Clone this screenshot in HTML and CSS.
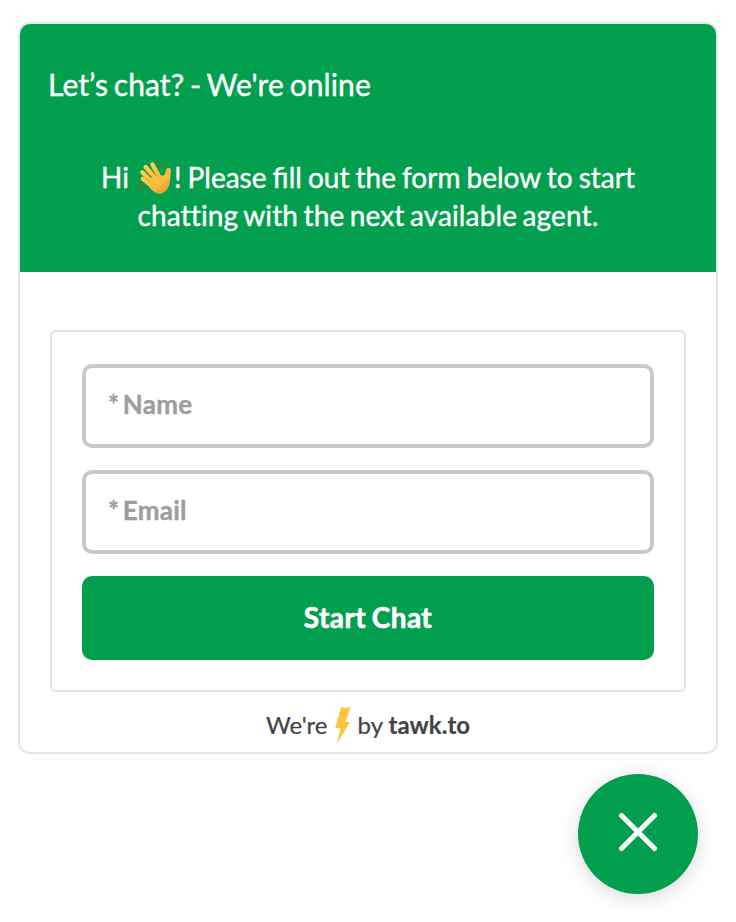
FILE: index.html
```html
<!DOCTYPE html>
<html lang="en">
<head>
<meta charset="utf-8">
<title>Chat</title>
<link rel="stylesheet" href="styles.css">
</head>
<body>
<main class="widget">
  <header class="header">
    <h1 class="title">Let’s chat? - We're online</h1>
    <p class="intro">Hi <svg class="wave" viewBox="0 0 36 36" aria-label="waving hand">
      <defs><linearGradient id="skin" gradientUnits="userSpaceOnUse" x1="8" y1="6" x2="28" y2="34"><stop offset="0" stop-color="#ffce52"/><stop offset=".65" stop-color="#fdbb40"/><stop offset="1" stop-color="#ee9223"/></linearGradient></defs>
      <g fill="none" stroke="url(#skin)" stroke-width="4.2" stroke-linecap="round">
        <path d="M20 20 8.6 7M23 18 15.4 4.4M17 24 5.3 12.3M17 28 5.8 18.8"/>
      </g>
      <path fill="url(#skin)" d="M14 18 24.5 15.5C27 16.5 27.8 15.5 28.7 11.5c.6-2.8 1.6-4 3.3-3.6 1.8.5 2.2 2.2 1.8 4.9-.5 2.8-.5 4.8-.8 7.8-.3 6-3.3 11.3-8.1 12.8-4.9 1.5-8-1.3-12-5.3l-2-3Z"/>
      <path d="m10.6 12.4 5.4 6M8.9 18l5.2 4.8M15.6 9.2l4.6 7.2" fill="none" stroke="#e58b22" stroke-width=".9" stroke-linecap="round"/>
      <path d="M21 1.2c2.5 1.2 4.2 3.3 5 6M19 4c1.7 1 3.2 3 3.7 5M2.3 22.5c.7 2.7 2.3 4.7 4.5 5.8M.8 25.2c.8 2.1 2 3.6 3.8 4.6" fill="none" stroke="#52713d" stroke-width="1.3" stroke-linecap="round"/>
    </svg>! Please fill out the form below to start<br><span class="intro-end">chatting with the next available agent.</span></p>
  </header>
  <form class="form">
    <input class="field" type="text" placeholder="* Name" aria-label="Name">
    <input class="field" type="email" placeholder="* Email" aria-label="Email">
    <button class="submit" type="button">Start Chat</button>
  </form>
  <footer class="footer"><span>We're</span><svg class="bolt" viewBox="0 0 16 38" aria-hidden="true"><path fill="#ffc53a" d="M6.2.8 Q10 3 15.8.8L10.4 15.7 15 16.3 1.8 37.8 5.6 22.2.2 22Z"/></svg><span>by <b>tawk.to</b></span></footer>
</main>
<button class="close" type="button" aria-label="Close chat">
  <svg class="cross" viewBox="0 0 40 40"><path d="m3.5 3.5 33 33m0-33-33 33"/></svg>
</button>
</body>
</html>
```
FILE: styles.css
```css
* { box-sizing: border-box; }
body {
  margin: 0;
  min-height: 922px;
  padding: 22px 18px 0;
  display: flex;
  flex-direction: column;
  background: #fff;
  font-family: Lato, sans-serif;
}
.widget {
  height: 732px;
  border: 2px solid #e5e5e5;
  border-radius: 12px;
  overflow: hidden;
}
.header {
  height: 248px;
  padding: 42px 28px 0;
  background: #02a04e;
  color: #fff;
  -webkit-text-stroke: .4px #fff;
}
.title {
  margin: 0;
  font-size: 30px;
  font-weight: 400;
  line-height: 36px;
  letter-spacing: .09px;
  word-spacing: -2px;
}
.intro {
  margin: 56px 0 0;
  font-size: 28px;
  line-height: 38px;
  text-align: center;
  white-space: nowrap;
  word-spacing: -1.1px;
}
.intro-end {
  letter-spacing: .12px;
  word-spacing: -1.8px;
}
.wave {
  width: 36px;
  height: 36px;
  margin: -6px 1px -6px 2px;
  vertical-align: -7px;
  position: relative;
  top: -5px;
}
.form {
  height: 362px;
  margin: 58px 30px 0;
  padding: 32px 30px 0;
  display: flex;
  flex-direction: column;
  gap: 22px;
  border: 2px solid #e0e0e0;
  border-radius: 6px;
}
.field {
  width: 100%;
  height: 84px;
  padding: 0 22px 4px;
  border: 4px solid #c9c9c9;
  border-radius: 10px;
  background: #fff;
  font: 700 26px Lato, sans-serif;
  letter-spacing: .25px;
  word-spacing: -3px;
}
.field::placeholder { color: #9e9e9e; opacity: 1; -webkit-text-stroke: .4px #9e9e9e; }
.submit {
  height: 84px;
  padding: 0 0 2px;
  border: 0;
  border-radius: 10px;
  background: #02a04e;
  color: #fff;
  font: 700 28px Lato, sans-serif;
  letter-spacing: .4px;
  word-spacing: -1.5px;
  -webkit-text-stroke: .6px #fff;
}
.footer {
  height: 60px;
  padding-top: 4px;
  display: flex;
  align-items: center;
  justify-content: center;
  color: #444;
  font-size: 24px;
  -webkit-text-stroke: .2px #444;
}
.bolt { width: 16px; height: 38px; margin: 2px 7px 0; }
.close {
  width: 120px;
  height: 120px;
  margin: 20px 20px 0 0;
  padding: 0 0 5px;
  align-self: flex-end;
  display: flex;
  align-items: center;
  justify-content: center;
  border: 0;
  border-radius: 50%;
  background: #02a04e;
  box-shadow: 0 4px 20px rgba(0, 0, 0, .15);
}
.cross { width: 40px; height: 40px; fill: none; stroke: #fff; stroke-width: 5; stroke-linecap: round; }
```
